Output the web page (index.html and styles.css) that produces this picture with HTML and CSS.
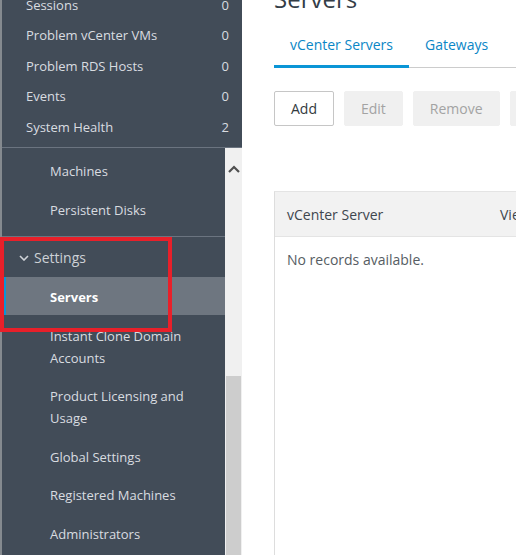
FILE: index.html
```html
<!DOCTYPE html>
<html>
<head>
<meta charset="utf-8">
<link rel="stylesheet" href="styles.css">
</head>
<body>
<div class="app">
  <aside class="sidebar">
    <div class="summary">
      <div class="sum-row"><span>Sessions</span><span class="count">0</span></div>
      <div class="sum-row"><span>Problem vCenter VMs</span><span class="count">0</span></div>
      <div class="sum-row"><span>Problem RDS Hosts</span><span class="count">0</span></div>
      <div class="sum-row"><span>Events</span><span class="count">0</span></div>
      <div class="sum-row"><span>System Health</span><span class="count">2</span></div>
    </div>
    <div class="navwrap">
      <nav class="nav">
        <div class="group first">
          <div class="item">Machines</div>
          <div class="item">Persistent Disks</div>
        </div>
        <div class="group last">
          <div class="group-head">
            <svg class="caret" width="10" height="6" viewBox="0 0 10 6"><path d="M1 1 L5 5 L9 1" fill="none" stroke="#cfd3d8" stroke-width="1.6"/></svg>
            <span>Settings</span>
          </div>
          <div class="item active">Servers</div>
          <div class="item">Instant Clone Domain Accounts</div>
          <div class="item">Product Licensing and Usage</div>
          <div class="item">Global Settings</div>
          <div class="item">Registered Machines</div>
          <div class="item">Administrators</div>
        </div>
      </nav>
      <div class="scrollbar">
        <div class="arrow">
          <svg width="12" height="8" viewBox="0 0 12 8"><path d="M1 7 L6 2 L11 7" fill="none" stroke="#505050" stroke-width="2.2"/></svg>
        </div>
        <div class="track-space"></div>
        <div class="thumb"></div>
      </div>
    </div>
    <div class="annotation"></div>
  </aside>
  <main class="main">
    <h1 class="title">Servers</h1>
    <div class="tabs">
      <div class="tab active">vCenter Servers</div>
      <div class="tab">Gateways</div>
    </div>
    <div class="toolbar">
      <button class="btn">Add</button>
      <button class="btn disabled">Edit</button>
      <button class="btn disabled">Remove</button>
      <button class="btn disabled">Disable</button>
    </div>
    <div class="grid">
      <div class="grid-head">
        <div class="col col1">vCenter Server</div>
        <div class="col">View Composer</div>
      </div>
      <div class="grid-empty">No records available.</div>
    </div>
  </main>
</div>
</body>
</html>
```

FILE: styles.css
```css
html, body {
  margin: 0;
  padding: 0;
  background: #ffffff;
}
body {
  font-family: "Open Sans", "Liberation Sans", sans-serif;
  overflow: hidden;
}
.app {
  display: flex;
  height: 555px;
  overflow: hidden;
}
.sidebar {
  position: relative;
  width: 240px;
  flex: none;
  border-left: 2px solid #858a8f;
  background: #424c58;
  display: flex;
  flex-direction: column;
  color: #d9dce0;
  font-size: 13px;
}
.summary {
  margin-top: -10.5px;
  padding-bottom: 4.5px;
  border-bottom: 1px solid #6b7480;
}
.sum-row {
  height: 30.5px;
  display: flex;
  align-items: center;
  justify-content: space-between;
  padding: 0 13px 0 24px;
}
.navwrap {
  flex: 1;
  display: flex;
  min-height: 0;
}
.nav {
  flex: 1;
  background: #424c58;
  overflow: hidden;
}
.group {
  border-bottom: 1px solid #6b7480;
}
.group.last {
  border-bottom: none;
}
.group.first {
  padding: 3.25px 0 8.25px;
}
.item {
  padding: 9.25px 20px 7.25px 48px;
  line-height: 22px;
}
.item.active {
  background: #6e7680;
  color: #ffffff;
  font-weight: 700;
  border-left: 3px solid #0a95d6;
  margin-left: 1px;
  padding-left: 44px;
}
.group-head {
  box-sizing: border-box;
  height: 39.75px;
  padding-top: 2px;
  display: flex;
  align-items: center;
  padding-left: 17px;
  font-size: 14px;
  color: #cdd1d6;
}
.caret {
  margin-right: 5px;
  margin-top: 1px;
}
.scrollbar {
  width: 17px;
  background: #f0f0f0;
  display: flex;
  flex-direction: column;
}
.arrow {
  height: 26px;
  display: flex;
  align-items: flex-end;
  justify-content: center;
}
.arrow svg {
  margin-bottom: 1px;
}
.track-space {
  height: 202px;
}
.thumb {
  flex: 1;
  margin: 0 1px;
  background: #cdcdcd;
}
.annotation {
  position: absolute;
  left: -2px;
  top: 237px;
  width: 164px;
  height: 87px;
  border: 4px solid #e8202a;
}
.main {
  flex: 1;
  padding-left: 32px;
  min-width: 0;
  overflow: hidden;
  color: #333a40;
}
.title {
  margin: -17px 0 0 0;
  font-size: 24px;
  line-height: 32px;
  font-weight: 400;
  color: #333d47;
}
.tabs {
  margin-top: 19px;
  display: flex;
  border-bottom: 1px solid #cccccc;
  width: 300px;
}
.tab {
  line-height: 22px;
  font-size: 14px;
  padding: 0 16px 9px;
  border-bottom: 3px solid transparent;
  margin-bottom: -1px;
  color: #0a86c6;
  white-space: nowrap;
}
.tab.active {
  border-bottom-color: #0a95d6;
}
.toolbar {
  margin-top: 23px;
  display: flex;
  gap: 10px;
  white-space: nowrap;
}
.btn {
  height: 35px;
  padding: 0 16px;
  font-family: inherit;
  font-size: 14px;
  border: 1px solid #c6c6c6;
  border-radius: 2px;
  background: #ffffff;
  color: #333a40;
  flex: none;
}
.btn.disabled {
  background: #f0f0f0;
  border-color: #f0f0f0;
  color: #a3a3a3;
}
.grid {
  margin-top: 65px;
  width: 400px;
  height: 400px;
  border-left: 1px solid #dddddd;
  border-top: 1px solid #e4e4e4;
}
.grid-head {
  height: 44px;
  background: #f2f2f2;
  border-bottom: 1px solid #e4e4e4;
  display: flex;
  align-items: center;
  font-size: 14px;
  color: #3e464e;
}
.col {
  padding-left: 12px;
  white-space: nowrap;
}
.col1 {
  width: 201px;
}
.grid-empty {
  padding: 12px 12px;
  line-height: 22px;
  font-size: 14px;
  color: #565d63;
}
```
